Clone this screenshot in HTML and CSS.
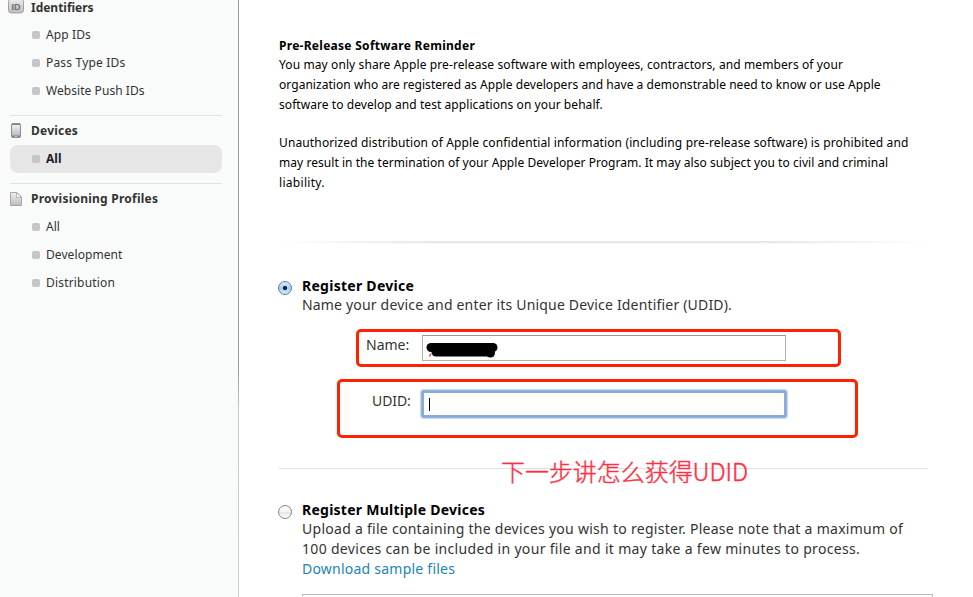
FILE: index.html
```html
<!DOCTYPE html>
<html lang="en">
<head>
<meta charset="utf-8">
<title>Register Device</title>
<link rel="stylesheet" href="styles.css">
</head>
<body>
<div class="page">
  <nav class="sidebar">
    <section class="group">
      <h3 class="group-title t-identifiers"><span class="icon">
        <svg width="18" height="18" viewBox="0 0 18 18"><defs><linearGradient id="g1" x1="0" y1="0" x2="0" y2="1"><stop offset="0" stop-color="#efefef"/><stop offset="1" stop-color="#bcbcbc"/></linearGradient></defs><rect x="1.5" y="0.500" width="15" height="14.500" rx="3" fill="url(#g1)" stroke="#a2a2a2"/><text class="id-text" x="9" y="11.500" text-anchor="middle">ID</text></svg></span>Identifiers</h3>
      <ul class="links">
        <li class="t-app">App IDs</li>
        <li class="t-pass">Pass Type IDs</li>
        <li class="t-web">Website Push IDs</li>
      </ul>
    </section>
    <section class="group">
      <h3 class="group-title t-devices"><span class="icon">
        <svg width="18" height="18" viewBox="0 0 18 18"><rect x="4.5" y="1.5" width="9" height="14" rx="1.5" fill="#858585" stroke="#8b8b8b"/><rect x="5" y="3" width="8" height="10.5" fill="url(#g1)"/><path d="M7.5 14.7h3" stroke="#cfcfcf"/></svg></span>Devices</h3>
      <ul class="links">
        <li class="active">All</li>
      </ul>
    </section>
    <section class="group">
      <h3 class="group-title t-prov"><span class="icon">
        <svg width="18" height="18" viewBox="0 0 18 18"><path d="M3.500 2.500h6.500l4.500 4.500v8.500h-11z" fill="url(#g1)" stroke="#a6a6a6"/><path d="M9.500 2.500v5h5z" fill="#fafafa" stroke="#b4b4b4"/></svg></span>Provisioning Profiles</h3>
      <ul class="links">
        <li>All</li>
        <li class="t-dev">Development</li>
        <li class="t-dist">Distribution</li>
      </ul>
    </section>
  </nav>
  <main class="content">
    <div class="reminder">
      <h4 class="t-rem">Pre-Release Software Reminder</h4>
      <p><span class="t-l1">You may only share Apple pre-release software with employees, contractors, and members of your</span>
      <span class="t-l2">organization who are registered as Apple developers and have a demonstrable need to know or use Apple</span>
      <span class="t-l3">software to develop and test applications on your behalf.</span></p>
      <p><span class="t-l4">Unauthorized distribution of Apple confidential information (including pre-release software) is prohibited and</span>
      <span class="t-l5">may result in the termination of your Apple Developer Program. It may also subject you to civil and criminal</span>
      <span class="t-l6">liability.</span></p>
    </div>
    <div class="fade-rule"></div>
    <section class="option">
      <span class="radio checked"></span>
      <div class="option-body">
        <h2 class="t-reg">Register Device</h2>
        <p class="t-name">Name your device and enter its Unique Device Identifier (UDID).</p>
      </div>
    </section>
    <div class="field name-field">
      <label>Name:</label>
      <div class="input"><svg class="redaction" width="76" height="20" viewBox="0 0 76 20"><path d="M6 6.500H68" stroke="#000" stroke-width="9" stroke-linecap="round"/><path d="M11 11H65" stroke="#000" stroke-width="9" stroke-linecap="round"/><circle cx="65.500" cy="12" r="4.500"/><path d="M6 12.500l-1.500 3" stroke="#e0504a" stroke-width="1.500"/></svg></div>
    </div>
    <div class="field udid-field">
      <label class="t-udid">UDID:</label>
      <div class="input focused"><span class="caret"></span></div>
    </div>
    <div class="rule"><span class="note">下一步讲怎么获得UDID</span></div>
    <section class="option">
      <span class="radio"></span>
      <div class="option-body">
        <h2 class="t-multi">Register Multiple Devices</h2>
        <p class="t-up">Upload a file containing the devices you wish to register. Please note that a maximum of</p>
        <p class="t-100">100 devices can be included in your file and it may take a few minutes to process.</p>
        <p class="t-dl"><a>Download sample files</a></p>
        <div class="upload"></div>
      </div>
    </section>
  </main>
</div>
</body>
</html>
```
FILE: styles.css
```css
* { box-sizing: border-box; margin: 0; padding: 0; }
body { background: #fff; font-family: "Noto Sans", "Noto Sans CJK SC", sans-serif; font-size: 12px; color: #000; }
.page { display: flex; width: 973px; height: 597px; }

.sidebar { flex: none; width: 239px; height: 597px; padding-left: 10px; padding-right: 16px; background: #f9fbfa; border-right: 1px solid; border-image: linear-gradient(#9a9a9a 0, #9a9a9a 370px, #c8caca 410px, #cdcfcf 100%) 1; color: #333; }
.group + .group { border-top: 1px solid #e0e1e1; padding-top: 1px; }
.group:nth-child(1) { height: 115px; }
.group:nth-child(2) { height: 68px; }
.group-title { display: flex; align-items: center; height: 28px; font-size: 12px; line-height: 28px; }
.group:first-child .group-title { height: 14px; line-height: 17px; margin-bottom: 7px; }
.icon { display: flex; width: 18px; height: 18px; margin-left: -3px; margin-right: 6px; }
.id-text { font: bold 9px "Liberation Sans", sans-serif; fill: #6e6e6e; }
.links { list-style: none; }
.links li { display: flex; align-items: center; height: 28px; line-height: 28px; padding-left: 22px; }
.links li::before { content: ""; width: 8px; height: 8px; margin-right: 6px; border-radius: 2px; background: #c5c6c6; }
.links .active { background: #e6e6e6; border-radius: 8px; font-weight: bold; color: #222; }

.content { flex: 1; padding: 36px 0 0 40px; }
.reminder { height: 205px; }
.reminder h4 { font-size: 12px; line-height: 19px; height: 19px; }
.reminder p { line-height: 20px; margin-bottom: 18px; }
.reminder span { display: block; white-space: nowrap; }
.fade-rule { height: 3px; width: 650px; background: linear-gradient(90deg, #fff, transparent 25%, transparent 75%, #fff), linear-gradient(#dedede, #fafafa); margin-bottom: 32px; }
.option { display: flex; white-space: nowrap; font-size: 14px; color: #333; }
.radio { flex: none; width: 14px; height: 14px; margin: 5px 10px 0 -1px; border-radius: 50%; border: 1px solid #858585; background: linear-gradient(#fff 0, #f2f2f2 50%, #e4e4e4 51%, #fff); }
.radio.checked { border-color: #64799c; background: radial-gradient(circle, #10253d 0 1.8px, transparent 2.4px), linear-gradient(#dcebfa, #a3ccf2 50%, #c9edff); }
.option h2 { font-size: 14px; line-height: 19px; height: 19px; color: #000; }
.option p { line-height: 20px; height: 20px; }
.option a { color: #1a84b4; }
.field { display: flex; border: 3px solid #ff2200; border-radius: 5px; color: #333; font-size: 14px; }
.name-field { margin: 14px 0 0 77px; width: 485px; height: 38px; padding: 3px 0 0 7px; }
.udid-field { margin: 12px 0 0 58px; width: 521px; height: 59px; padding: 9px 0 0 32px; }
.field label { line-height: 20px; height: 20px; }
.name-field label { width: 56px; }
.udid-field label { width: 50px; }
.input { display: flex; width: 364px; height: 26px; background: #fff; border: 1px solid #b0b0b0; border-top-color: #999; }
.redaction { display: block; margin: 5px 0 0 2px; }
.focused { border: 2px solid #8bacd6; border-radius: 2px; box-shadow: 0 0 0 1px #8fb3dc, 0 0 1px 2px #c3d8ee; }
.caret { width: 1px; height: 13px; margin: 5px 0 0 5px; background: #000; }
.rule { position: relative; width: 649px; height: 1px; margin: 30px 0 31px; background: #e0e0e0; }
.note { position: absolute; left: 222px; top: -15px; font: 300 24px/36px "Noto Sans CJK SC", sans-serif; -webkit-text-stroke: 0.4px #ff3045; letter-spacing: -0.05px; color: #ff3045; white-space: nowrap; }
.upload { width: 631px; height: 3px; margin-top: 15px; border: 1px solid #bbb; border-bottom: 0; }

.t-identifiers { letter-spacing: -0.02px; }
.t-app { letter-spacing: 0.12px; }
.t-pass { letter-spacing: 0.19px; }
.t-web { letter-spacing: 0.06px; }
.t-devices { letter-spacing: 0.21px; }
.t-prov { letter-spacing: 0.23px; }
.t-dev { letter-spacing: 0.08px; }
.t-dist { letter-spacing: 0.18px; }
.t-rem { letter-spacing: 0.28px; }
.t-l1 { letter-spacing: 0.105px; }
.t-l2 { letter-spacing: 0.05px; }
.t-l3 { letter-spacing: 0.07px; }
.t-l4 { letter-spacing: 0.132px; }
.t-l5 { letter-spacing: 0.05px; }
.t-l6 { letter-spacing: 0.3px; }
.t-reg { letter-spacing: 0.27px; }
.t-name { letter-spacing: 0.18px; }
.t-multi { letter-spacing: 0.25px; }
.t-up { letter-spacing: 0.275px; }
.t-100 { letter-spacing: 0.32px; }
.t-dl { letter-spacing: 0.23px; }
.t-udid { letter-spacing: -0.1px; }
```
